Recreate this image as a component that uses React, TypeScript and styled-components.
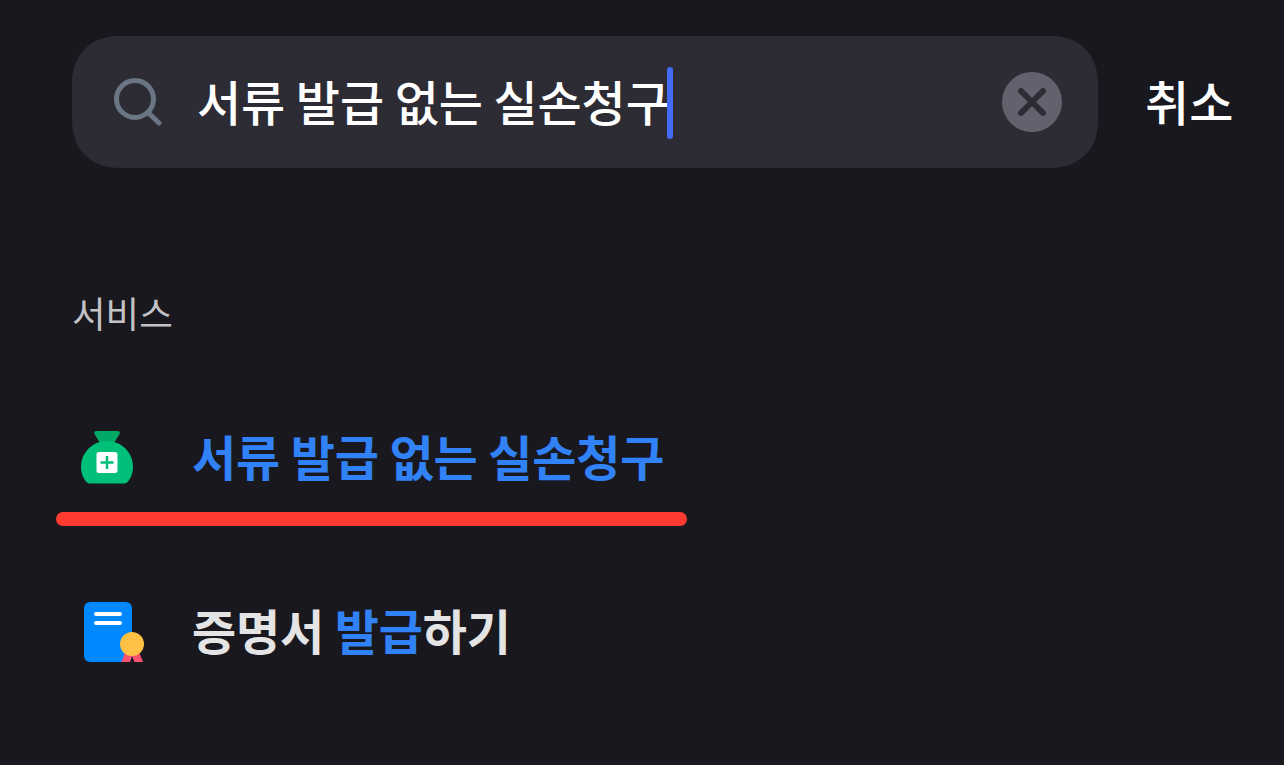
import { useState } from "react";
import styled, { createGlobalStyle } from "styled-components";

const GlobalStyle = createGlobalStyle`
  * {
    box-sizing: border-box;
  }
  body {
    margin: 0;
    background-color: #19181e;
    font-family: "Noto Sans CJK KR", sans-serif;
  }
  button {
    padding: 0;
    border: none;
    background: none;
    color: inherit;
    font-family: inherit;
    cursor: pointer;
  }
`;

const Container = styled.div`
  width: 1284px;
  height: 765px;
  padding-top: 36px;
  overflow: hidden;
  background-color: #19181e;
`;

const Header = styled.header`
  display: flex;
  align-items: center;
  gap: 47px;
  padding-left: 72px;
`;

const SearchBar = styled.div`
  display: flex;
  align-items: center;
  width: 1026px;
  height: 132px;
  padding: 0 36px 0 42px;
  border-radius: 42px;
  background-color: #2d2c35;

  @supports (corner-shape: superellipse(1.15)) {
    border-radius: 48px;
    corner-shape: superellipse(1.15);
  }
`;

const SearchIcon = styled.svg`
  flex: none;
  width: 48px;
  height: 48px;
  margin-right: 35px;
`;

const Query = styled.div`
  display: flex;
  align-items: center;
  flex: 1;
  color: #fff;
  font-size: 48px;
  font-weight: 500;
  line-height: 72px;
  letter-spacing: -0.1px;
  white-space: pre;

  .text {
    padding-bottom: 5px;
  }
`;

const Caret = styled.span`
  width: 6px;
  height: 72px;
  margin: 2px 0 0 -3px;
  border-radius: 3px;
  background-color: #446bf3;
`;

const ClearButton = styled.button`
  width: 60px;
  height: 60px;

  svg {
    display: block;
  }
`;

const CancelButton = styled.button`
  padding-bottom: 5px;
  color: #fff;
  font-size: 48px;
  font-weight: 500;
  line-height: 72px;
`;

const Section = styled.section`
  padding: 118px 72px 0;

  h2 {
    margin: 0;
    color: #c3c3c6;
    font-size: 36.5px;
    font-weight: 400;
    line-height: 54px;
  }
`;

const ServiceList = styled.ul`
  display: grid;
  grid-auto-rows: 174px;
  margin: 31px 0 0;
  padding: 0;
  list-style: none;
`;

const ServiceItem = styled.li`
  position: relative;
  display: flex;
  align-items: center;
  gap: 48px;

  > svg {
    flex: none;
  }
`;

const ServiceName = styled.span`
  padding-bottom: 6px;
  color: #e4e4e5;
  font-size: 48px;
  font-weight: 700;
  line-height: 72px;
  letter-spacing: -0.15px;
  white-space: pre;

  mark {
    background: none;
    color: #3182f6;
  }
`;

const Underline = styled.div`
  position: absolute;
  left: -16px;
  bottom: 19.5px;
  width: 631px;
  height: 14px;
  border-radius: 7px;
  background-color: #ff3b30;
`;

function MoneyBagIcon() {
  return (
    <svg width="72" height="72" viewBox="0 0 72 72">
      <path
        d="M25 9h20q4 0 2.4 3.3L41.5 22h-13L22.6 12.3Q21 9 25 9z"
        fill="#00a866"
      />
      <path
        d="M35 19C20.500 19 9 30.500 9 45c0 5.500 1.700 10.300 4.600 14 1.500 1.900 2.800 2.500 5 2.500h32.800c2.200 0 3.500-.6 5-2.500C59.300 55.300 61 50.500 61 45 61 30.500 49.500 19 35 19z"
        fill="#00bf78"
      />
      <rect x="24.500" y="30" width="21" height="21" rx="2.500" fill="#fff" />
      <path d="M35 34v13M28.500 40.500h13" stroke="#00bf78" strokeWidth="2.500" />
    </svg>
  );
}

function CertificateIcon() {
  return (
    <svg width="72" height="72" viewBox="0 0 72 72">
      <rect x="12" y="6" width="48" height="60" rx="6" fill="#0088ff" />
      <path
        d="M24 18h24M24 27h24"
        stroke="#fff"
        strokeWidth="4"
        strokeLinecap="round"
      />
      <path d="M53 56h7v4l-2 6h-8.500zM60 56h7l4 10h-8.500L60 60z" fill="#fb5270" />
      <circle cx="60" cy="48" r="12" fill="#ffc145" />
    </svg>
  );
}

interface Service {
  name: { text: string; matched?: boolean }[];
  Icon: () => React.ReactElement;
  underlined?: boolean;
}

const SERVICES: Service[] = [
  {
    name: [{ text: "서류 발급 없는 실손청구", matched: true }],
    Icon: MoneyBagIcon,
    underlined: true,
  },
  {
    name: [
      { text: "증명서 " },
      { text: "발급", matched: true },
      { text: "하기" },
    ],
    Icon: CertificateIcon,
  },
];

export default function App() {
  const [query, setQuery] = useState("서류 발급 없는 실손청구");

  const handleClear = () => {
    setQuery("");
  };

  return (
    <Container>
      <GlobalStyle />
      <Header>
        <SearchBar>
          <SearchIcon viewBox="0 0 48 48" fill="none">
            <circle cx="21" cy="21" r="18.500" stroke="#6b7684" strokeWidth="5" />
            <path
              d="M34.500 35l10.500 10"
              stroke="#6b7684"
              strokeWidth="5"
              strokeLinecap="round"
            />
          </SearchIcon>
          <Query>
            <span className="text">{query}</span>
            <Caret />
          </Query>
          <ClearButton aria-label="지우기" onClick={handleClear}>
            <svg width="60" height="60" viewBox="0 0 60 60">
              <circle cx="30" cy="30" r="30" fill="#62616d" />
              <path
                d="M19 19l22 22M41 19L19 41"
                stroke="#2d2c35"
                strokeWidth="6"
                strokeLinecap="round"
              />
            </svg>
          </ClearButton>
        </SearchBar>
        <CancelButton>취소</CancelButton>
      </Header>

      <Section>
        <h2>서비스</h2>
        <ServiceList>
          {SERVICES.map(({ name, Icon, underlined }, i) => (
            <ServiceItem key={i}>
              <Icon />
              <ServiceName>
                {name.map((part, j) =>
                  part.matched ? <mark key={j}>{part.text}</mark> : part.text
                )}
              </ServiceName>
              {underlined && <Underline />}
            </ServiceItem>
          ))}
        </ServiceList>
      </Section>
    </Container>
  );
}
